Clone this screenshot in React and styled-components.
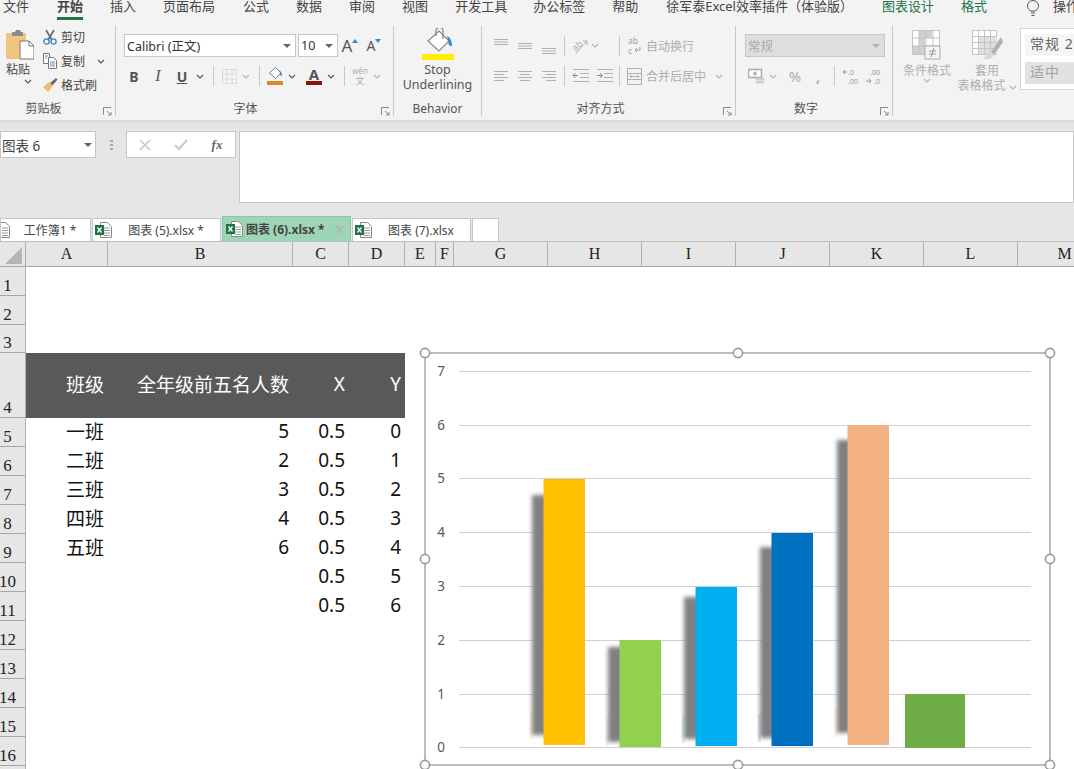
import React from 'react';
import styled, { createGlobalStyle } from 'styled-components';

const GlobalStyle = createGlobalStyle`
  html, body { margin: 0; padding: 0; background: #fff; }
  body { font-family: "Noto Sans", "Noto Sans CJK SC", sans-serif; }
`;

const CJK = `"Noto Sans", "Noto Sans CJK SC", sans-serif`;

const Page = styled.div`
  position: relative;
  width: 1074px;
  height: 769px;
  overflow: hidden;
  font-family: ${CJK};
  color: #444;
`;

const MenuBar = styled.div`
  display: flex;
  height: 20px;
  padding-left: 3px;
  background: #f3f3f3;
  white-space: nowrap;
`;

const MenuItem = styled.div`
  box-sizing: border-box;
  height: 20px;
  margin-left: ${p => p.$ml ?? 27}px;
  font-size: 13px;
  line-height: 12px;
  color: ${p => (p.$green ? '#217346' : '#444')};
  font-weight: ${p => (p.$active ? 700 : 400)};
  border-bottom: 3px solid ${p => (p.$active ? '#217346' : 'transparent')};
`;

const Ribbon = styled.div`
  display: flex;
  height: 100px;
  box-sizing: border-box;
  padding: 6px 0 4px;
  background: #f3f3f3;
`;

const Group = styled.div`
  position: relative;
  box-sizing: border-box;
  flex: ${p => (p.$w ? `0 0 ${p.$w}px` : '1')};
  display: flex;
  flex-direction: column;
  border-right: ${p => (p.$w ? '1px solid #c8c8c8' : 'none')};
`;

const GroupBody = styled.div`
  height: 76px;
  display: ${p => (p.$row ? 'flex' : 'block')};
  padding-left: ${p => p.$pl || 0}px;
`;

const GroupLabel = styled.div`
  height: 14px;
  margin-top: 1px;
  font-size: 12px;
  line-height: 14px;
  text-align: center;
  padding-right: ${p => p.$pr || 0}px;
  color: #555;
`;

const Launcher = styled.svg`
  position: absolute;
  right: 3px;
  bottom: 0;
  width: 9px;
  height: 9px;
`;

const PasteCol = styled.div`
  flex: 0 0 34px;
  padding: 4px 0 0 6px;
  display: flex;
  flex-direction: column;
  font-size: 12px;
`;

const PasteText = styled.div`
  line-height: 14px;
  margin-top: 3px;
`;

const ClipCol = styled.div`
  margin: -1px 0 0 2px;
  display: flex;
  flex-direction: column;
`;

const ClipRow = styled.div`
  display: flex;
  align-items: center;
  height: 24px;
  gap: 3px;
  font-size: 12px;
`;

const ToolRow = styled.div`
  display: flex;
  align-items: center;
  height: ${p => p.$h || 23}px;
  margin-top: ${p => p.$mt || 0}px;
  padding-left: ${p => p.$pl || 0}px;
  white-space: nowrap;
`;

const Tool = styled.span`
  flex: 0 0 ${p => p.$w}px;
  height: 22px;
  margin-left: ${p => p.$ml || 0}px;
  display: inline-flex;
  align-items: center;
  justify-content: center;
  position: relative;
  font-size: ${p => p.$size || 13}px;
  font-weight: ${p => p.$weight || 400};
  font-style: ${p => (p.$italic ? 'italic' : 'normal')};
  text-decoration: ${p => (p.$under ? 'underline' : 'none')};
  font-family: ${p => (p.$serif ? '"Liberation Serif", serif' : 'inherit')};
  color: ${p => (p.$off ? '#aeaeae' : '#555')};
`;

const RaisedMark = styled.svg`
  align-self: flex-start;
  margin-top: 4px;
`;

const Sep = styled.span`
  flex: 0 0 1px;
  height: 20px;
  margin: 0 ${p => p.$r ?? 0}px 0 ${p => p.$l ?? 0}px;
  background: #c8c8c8;
`;

const FieldBox = styled.div`
  box-sizing: border-box;
  flex: 0 0 ${p => p.$w}px;
  height: 23px;
  margin-left: ${p => p.$ml || 0}px;
  padding: 0 4px 0 2px;
  display: flex;
  align-items: center;
  justify-content: space-between;
  font-size: 12.5px;
  color: ${p => (p.$off ? '#aaa' : '#333')};
  background: ${p => (p.$off ? '#dfdedd' : '#fff')};
  border: 1px solid #c6c6c6;
`;

const OffText = styled.span`
  font-size: 12px;
  margin-left: ${p => p.$ml || 0}px;
  color: #aeaeae;
`;

const StopCol = styled.div`
  display: flex;
  flex-direction: column;
  align-items: center;
  padding-top: 2px;
`;

const StopBar = styled.div`
  width: 32px;
  height: 6px;
  margin-top: 2px;
  background: #ffee00;
`;

const StopText = styled.div`
  margin-top: 2px;
  font-size: 12.5px;
  line-height: 15px;
  text-align: center;
  color: #555;
`;

const BigTool = styled.div`
  flex: 0 0 ${p => p.$w}px;
  display: flex;
  flex-direction: column;
  align-items: center;
  padding-top: 4px;
  font-size: 12px;
  line-height: 15px;
  color: #aeaeae;
  white-space: nowrap;
`;

const BigIcon = styled.div`
  height: 32px;
  margin-bottom: 1px;
`;

const Gallery = styled.div`
  box-sizing: border-box;
  flex: 1;
  height: 62px;
  margin: 2px 0 0 2px;
  padding: 5px 0 0 4px;
  background: #fff;
  border: 1px solid #d4d4d4;
`;

const GalleryCell = styled.div`
  height: 22px;
  margin-bottom: 6px;
  padding-left: 5px;
  font-size: 14px;
  line-height: 20px;
  letter-spacing: 1px;
  white-space: nowrap;
  color: ${p => (p.$off ? '#a0a0a0' : '#666')};
  background: ${p => (p.$off ? '#e2e2e4' : '#f5f5f5')};
`;

const FormulaArea = styled.div`
  height: 96px;
  box-sizing: border-box;
  padding-top: 11px;
  display: flex;
  align-items: flex-start;
  background: linear-gradient(#d9d9d9, #e6e6e6 5px);
`;

const FormulaBox = styled.div`
  box-sizing: border-box;
  flex: ${p => (p.$w ? `0 0 ${p.$w}px` : '1')};
  height: ${p => p.$h || 27}px;
  margin-left: ${p => p.$ml || 0}px;
  background: #fff;
  border: 1px solid #c6c6c6;
  display: flex;
  align-items: center;
  font-size: 13.5px;
  color: #444;
`;

const NameText = styled.span`
  flex: 1;
  padding-left: 1px;
`;

const Grip = styled.span`
  flex: 0 0 3px;
  height: 12px;
  margin: 8px 0 0 14px;
  background: radial-gradient(circle, #aaa 1.2px, transparent 1.4px) 0 0 / 3px 4px;
`;

const FxCell = styled.span`
  flex: 1;
  display: flex;
  justify-content: center;
  font-family: "Liberation Serif", serif;
  font-style: italic;
  font-weight: 700;
  font-size: 13px;
  color: #666;
`;

const TabBar = styled.div`
  height: 26px;
  box-sizing: border-box;
  display: flex;
  align-items: flex-end;
  gap: 1px;
  background: #e6e6e6;
  border-bottom: 1px solid #bdbdbd;
`;

const FileTab = styled.div`
  box-sizing: border-box;
  flex: 0 0 ${p => p.$w}px;
  height: ${p => (p.$active ? 25 : 23)}px;
  display: flex;
  align-items: center;
  padding: 0 0 ${p => (p.$active ? 0 : 1)}px ${p => p.$pl ?? 2}px;
  font-size: 12px;
  white-space: nowrap;
  color: #444;
  font-weight: ${p => (p.$active ? 700 : 400)};
  background: ${p => (p.$active ? '#9fd5b7' : '#fff')};
  border: 1px solid ${p => (p.$active ? '#8fc4a6' : '#c6c6c6')};
  border-bottom: none;
`;

const TabTitle = styled.span`
  flex: ${p => (p.$left ? '0 0 auto' : 1)};
  margin-left: ${p => (p.$left ? 3 : 0)}px;
  text-align: center;
`;

const TabClose = styled.span`
  margin-left: 9px;
  font-size: 13px;
  color: #a9bdb1;
`;

const Sheet = styled.div`
  display: grid;
  grid-template-columns: 26px 82px 185px 56px 56px 31px 18px repeat(7, 94px);
  grid-template-rows: 25px 29px 29px 28px 65px repeat(13, 29px);
`;

const HeadCell = styled.div`
  box-sizing: border-box;
  background: #e6e6e6;
  border-right: 1px solid #b0b0b0;
  border-bottom: 1px solid #a6a6a6;
  font-family: "Liberation Serif", serif;
  font-size: 16px;
  color: #222;
`;

const Corner = styled(HeadCell)`
  position: relative;
  &::after {
    content: '';
    position: absolute;
    left: 5px;
    top: 5px;
    width: 17px;
    height: 17px;
    background: #b5b5b5;
    clip-path: polygon(100% 0, 100% 100%, 0 100%);
  }
`;

const ColHead = styled(HeadCell)`
  display: flex;
  align-items: center;
  justify-content: center;
`;

const RowHead = styled(HeadCell)`
  display: flex;
  align-items: flex-end;
  justify-content: center;
  padding-right: 10px;
  font-size: 17px;
  line-height: 18px;
`;

const Cell = styled.div`
  box-sizing: border-box;
  display: flex;
  align-items: center;
  justify-content: ${p => (p.$left ? 'flex-start' : 'flex-end')};
  padding: ${p => (p.$left ? '0 0 4px 40px' : '0 4px 4px 0')};
  font-size: 19px;
  white-space: nowrap;
  font-family: ${CJK};
  color: ${p => (p.$dark ? '#fff' : '#111')};
  background: ${p => (p.$dark ? '#595959' : '#fff')};
`;

const Blank = styled.div`
  grid-column: ${p => p.$from} / -1;
  background: #fff;
`;

const ChartSvg = styled.svg`
  position: absolute;
  left: 415px;
  top: 340px;
  width: 659px;
  height: 429px;
`;

const AxisLabel = styled.text`
  font-family: "Noto Sans", sans-serif;
  font-size: 13.5px;
  fill: #595959;
  text-anchor: middle;
`;

const Chevron = ({ off }) => (
  <svg width="8" height="5" viewBox="0 0 8 5">
    <path d="M1 1l3 3 3-3" fill="none" stroke={off ? '#b5b5b5' : '#555'} strokeWidth="1.1" />
  </svg>
);

const Caret = ({ off }) => (
  <svg width="8" height="4" viewBox="0 0 8 4">
    <path d="M0 0h8L4 4z" fill={off ? '#b5b5b5' : '#666'} />
  </svg>
);

const LauncherIcon = () => (
  <Launcher viewBox="0 0 9 9">
    <path d="M.5 8V.5H8M4 4l4 4M8 5v3H5" fill="none" stroke="#888" strokeWidth="1" />
  </Launcher>
);

const PasteIcon = () => (
  <svg width="28" height="30" viewBox="0 0 28 30">
    <path d="M0 3h20v26H0z" fill="#f0c67e" />
    <path d="M6 2h3l1-2h4l1 2h2v4H6z" fill="#8a8a8a" />
    <path d="M14 11h9l5 5v13H14z" fill="#fff" stroke="#777" />
    <path d="M23 11v5h5" fill="none" stroke="#777" />
  </svg>
);

const ScissorsIcon = () => (
  <svg width="16" height="16" viewBox="0 0 16 16">
    <path d="M4 1l6 10M12 1L6 11" stroke="#666" strokeWidth="1.6" fill="none" />
    <circle cx="4.5" cy="12.5" r="2.6" fill="none" stroke="#3d85c6" strokeWidth="1.3" />
    <circle cx="11.5" cy="12.5" r="2.6" fill="none" stroke="#3d85c6" strokeWidth="1.3" />
  </svg>
);

const CopyIcon = () => (
  <svg width="16" height="16" viewBox="0 0 16 16">
    <path d="M1.500 .5h6v10h-6z" fill="#fff" stroke="#777" />
    <path d="M6.500 4.500h5l3 3v8h-8z" fill="#fff" stroke="#777" />
    <path d="M8 9h5M8 11h5M8 13h5M3 3h3M3 5h2" stroke="#5b8fc7" />
  </svg>
);

const BrushIcon = () => (
  <svg width="16" height="16" viewBox="0 0 16 16">
    <path d="M8 6l6-5 1.500 1.500-5 6z" fill="#666" />
    <path d="M1 10l6-5 4 4-5 6z" fill="#e8bd6c" />
  </svg>
);

const StopBucketIcon = () => (
  <svg width="32" height="24" viewBox="0 0 32 24">
    <path d="M6 13L17 3l10 10-10 10z" fill="#fff" stroke="#888" strokeWidth="1.2" />
    <path d="M14 8V3a3.500 3.500 0 0 1 7 0v8" fill="none" stroke="#888" strokeWidth="1.2" />
    <path d="M25 8c3 1 5 5 5 10-3 0-4-2-3.500-4.500z" fill="#3d85c6" />
  </svg>
);

const LinesIcon = ({ rows }) => (
  <svg width="16" height="20" viewBox="0 0 16 20">
    {rows.map(([a, b, y]) => (
      <line key={y} x1={a} x2={b} y1={y} y2={y} stroke="#b0b0b0" />
    ))}
  </svg>
);

const IndentIcon = ({ flip }) => (
  <svg width="17" height="14" viewBox="0 0 17 14">
    <path d="M1 .5h16M8 4.500h9M8 8.500h9M1 12.500h16" stroke="#b0b0b0" />
    <path d={flip ? 'M1 6.500h5M4 4l2.500 2.500L4 9' : 'M1 6.500h5M3.500 4L1 6.500 3.500 9'} fill="none" stroke="#8a8a8a" />
  </svg>
);

const OrientIcon = () => (
  <svg width="18" height="16" viewBox="0 0 18 16">
    <text x="1" y="11" fontSize="9" fill="#aeaeae" transform="rotate(-40 6 8)">ab</text>
    <path d="M5 15L16 3M12 3h4v4" fill="none" stroke="#aeaeae" />
  </svg>
);

const WrapIcon = () => (
  <svg width="14" height="18" viewBox="0 0 14 18">
    <text x="0" y="7" fontSize="8.500" fill="#a0a0a0">ab</text>
    <text x="0" y="17" fontSize="8.500" fill="#a0a0a0">c</text>
    <path d="M12 10v3H7M9 11l-2 2 2 2" fill="none" stroke="#a0a0a0" />
  </svg>
);

const MergeIcon = () => (
  <svg width="15" height="17" viewBox="0 0 15 17">
    <path d="M.5.5h14v16H.5zM.5 5.500h14M.5 11.500h14" fill="none" stroke="#aeaeae" />
    <path d="M3 8.500h9M4.500 7L3 8.500 4.500 10M10.500 7L12 8.500 10.500 10" fill="none" stroke="#aeaeae" />
  </svg>
);

const GridIcon = () => (
  <svg width="15" height="15" viewBox="0 0 15 15">
    <path d="M.5.5h14v14H.5zM5 .5v14M10 .5v14M.5 5h14M.5 10h14" fill="none" stroke="#c4c4c4" strokeDasharray="1 1" />
  </svg>
);

const MoneyIcon = () => (
  <svg width="17" height="17" viewBox="0 0 17 17">
    <path d="M.5 1.500h13v8H.5z" fill="#fff" stroke="#aaa" strokeWidth="1.500" />
    <circle cx="7" cy="5.500" r="2" fill="#b5b5b5" />
    <ellipse cx="12" cy="11" rx="4.500" ry="1.500" fill="#cfcfcf" />
    <ellipse cx="12" cy="14" rx="4.500" ry="1.500" fill="#cfcfcf" />
  </svg>
);

const DecimalIcon = ({ top, bottom, left }) => (
  <svg width="16" height="17" viewBox="0 0 16 17">
    <text x={left ? 6 : 4} y="7" fontSize="7" fill="#999">{top}</text>
    <text x={left ? 6 : 8} y="16" fontSize="7" fill="#999">{bottom}</text>
    <path d={left ? 'M1 4h4M3 2L1 4l2 2' : 'M0 13h5M3 11l2 2-2 2'} fill="none" stroke="#999" />
  </svg>
);

const CondFormatIcon = () => (
  <svg width="30" height="30" viewBox="0 0 30 30">
    <path d="M.5.5h27v24H.5z" fill="#fff" stroke="#c4c4c4" />
    <path d="M7 1h13v7h-13zM7 8h6v8h-6zM1 16h12v8H1z" fill="#cfcfcf" />
    <path d="M7 .5v24M14 .5v24M21 .5v24M.5 8h27M.5 16h27" stroke="#c4c4c4" fill="none" />
    <path d="M13 16h15v13H13z" fill="#f3f3f3" stroke="#aaa" />
    <path d="M17 21h7M17 24h7M22 18l-3 9" stroke="#999" fill="none" />
  </svg>
);

const TableFormatIcon = () => (
  <svg width="31" height="32" viewBox="0 0 31 32">
    <path d="M.5.5h24v24H.5z" fill="#fff" stroke="#c4c4c4" />
    <path d="M6 6h19v18H6z" fill="#e0e0e0" />
    <path d="M6.500.5v24M12.500.5v24M18.500.5v24M.5 6.500h24M.5 12.500h24M.5 18.500h24" stroke="#c4c4c4" fill="none" />
    <path d="M29 7L19 22l3 3L31 12z" fill="#b0b0b0" />
    <path d="M18 21c-4 2-3 5-7 8 6 1 11-1 11-5z" fill="#d8d8d8" />
  </svg>
);

const BulbIcon = () => (
  <svg width="14" height="17" viewBox="0 0 14 17">
    <path d="M4.500 11C3 9.500 1.500 8 1.500 6a5.500 5.500 0 0 1 11 0c0 2-1.500 3.500-3 5zM5 13h4M5.500 15.500h3" fill="none" stroke="#555" />
  </svg>
);

const XlsIcon = () => (
  <svg width="17" height="16" viewBox="0 0 17 16">
    <path d="M5.500.5h7l4 4v11h-11z" fill="#fff" stroke="#8a8a8a" />
    <path d="M9 6h6M9 8.500h6M9 11h6M9 13.500h6" stroke="#9a9a9a" />
    <path d="M0 3h9v10H0z" fill="#217346" />
    <path d="M2.500 5.500l4 5M6.500 5.500l-4 5" stroke="#fff" strokeWidth="1.300" />
  </svg>
);

const CancelIcon = () => (
  <svg width="12" height="12" viewBox="0 0 12 12">
    <path d="M1 1l10 10M11 1L1 11" stroke="#c8c8c8" strokeWidth="1.6" />
  </svg>
);

const CheckIcon = () => (
  <svg width="14" height="12" viewBox="0 0 14 12">
    <path d="M1 6l4 4 8-9" fill="none" stroke="#c8c8c8" strokeWidth="2" />
  </svg>
);

const menuItems = [
  { t: '文件', ml: 0 },
  { t: '开始', active: true, ml: 28 },
  { t: '插入' },
  { t: '页面布局' },
  { t: '公式', ml: 28 },
  { t: '数据' },
  { t: '审阅' },
  { t: '视图' },
  { t: '开发工具' },
  { t: '办公标签', ml: 26 },
  { t: '帮助' },
  { t: '徐军泰Excel效率插件（体验版）', ml: 28 },
  { t: '图表设计', green: true, ml: 29 },
  { t: '格式', green: true },
];

const columns = ['A', 'B', 'C', 'D', 'E', 'F', 'G', 'H', 'I', 'J', 'K', 'L', 'M'];

const tableRows = {
  4: ['班级', '全年级前五名人数', 'X', 'Y'],
  5: ['一班', 5, 0.5, 0],
  6: ['二班', 2, 0.5, 1],
  7: ['三班', 3, 0.5, 2],
  8: ['四班', 4, 0.5, 3],
  9: ['五班', 6, 0.5, 4],
  10: ['', '', 0.5, 5],
  11: ['', '', 0.5, 6],
};

const gridLines = [
  { label: 7, y: 371 },
  { label: 6, y: 425 },
  { label: 5, y: 478 },
  { label: 4, y: 532 },
  { label: 3, y: 586 },
  { label: 2, y: 640 },
  { label: 1, y: 694 },
  { label: 0, y: 747 },
];

const bars = [
  { x: 543.5, w: 41.5, top: 479, bottom: 745, color: '#ffc000', sx: 532, st: 495, sb: 735 },
  { x: 619.5, w: 41.5, top: 640, bottom: 747, color: '#92d050', sx: 608, st: 647, sb: 742 },
  { x: 695.5, w: 41.5, top: 587, bottom: 746, color: '#00b0f0', sx: 684, st: 597, sb: 739 },
  { x: 771.5, w: 41.5, top: 533, bottom: 746, color: '#0070c0', sx: 760, st: 547, sb: 738 },
  { x: 847.5, w: 41.5, top: 425, bottom: 745, color: '#f4b183', sx: 837, st: 440, sb: 733 },
  { x: 905, w: 60, top: 694, bottom: 748, color: '#70ad47' },
];

const handles = [
  [425, 353], [738, 353], [1050, 353],
  [425, 559], [1050, 559],
  [425, 765], [738, 765], [1050, 765],
];

const Chart = () => (
  <ChartSvg viewBox="415 340 659 429">
    <defs>
      <filter id="barShadow" x="-80%" y="-5%" width="260%" height="110%">
        <feGaussianBlur stdDeviation="2" />
      </filter>
    </defs>
    <rect x="425" y="353" width="625" height="412" fill="#fff" stroke="#a0a0a0" strokeWidth="1.4" />
    {gridLines.map(l => (
      <g key={l.label}>
        <line x1="459" x2="1031" y1={l.y + 0.5} y2={l.y + 0.5} stroke="#d0d0d0" />
        <AxisLabel x="441" y={l.y + 4.5}>{l.label}</AxisLabel>
      </g>
    ))}
    {bars.map(b => (
      <g key={b.x}>
        {b.sx && (
          <>
            <rect x={b.sx - 2} y={b.sb - 24} width="3" height="28" fill={b.color} opacity=".18" />
            <rect x={b.sx} y={b.st} width={b.x - b.sx + 4} height={b.sb - b.st} fill="#808080" filter="url(#barShadow)" />
          </>
        )}
        <rect x={b.x} y={b.top} width={b.w} height={b.bottom - b.top} fill={b.color} />
      </g>
    ))}
    {handles.map(([x, y]) => (
      <circle key={`${x}-${y}`} cx={x} cy={y} r="4.6" fill="#fff" stroke="#9a9a9a" strokeWidth="1.6" />
    ))}
  </ChartSvg>
);

const App = () => {
  const rowNumbers = Array.from({ length: 17 }, (_, i) => i + 1);

  return (
    <Page>
      <GlobalStyle />

      <MenuBar>
        {menuItems.map(item => (
          <MenuItem key={item.t} $ml={item.ml} $active={item.active} $green={item.green}>{item.t}</MenuItem>
        ))}
        <MenuItem $ml={39}><BulbIcon /></MenuItem>
        <MenuItem $ml={13}>操作说明搜索</MenuItem>
      </MenuBar>

      <Ribbon>
        <Group $w={116}>
          <GroupBody $row>
            <PasteCol>
              <PasteIcon />
              <PasteText>粘贴</PasteText>
              <Tool $w={8} $ml={9}><Chevron /></Tool>
            </PasteCol>
            <ClipCol>
              <ClipRow><ScissorsIcon />剪切</ClipRow>
              <ClipRow><CopyIcon />复制<Tool $w={16} $ml={5}><Chevron /></Tool></ClipRow>
              <ClipRow><BrushIcon />格式刷</ClipRow>
            </ClipCol>
          </GroupBody>
          <GroupLabel $pr={28}>剪贴板</GroupLabel>
          <LauncherIcon />
        </Group>

        <Group $w={278}>
          <GroupBody>
            <ToolRow $mt={8} $pl={8}>
              <FieldBox $w={172}>Calibri (正文)<Caret /></FieldBox>
              <FieldBox $w={40} $ml={2}>10<Caret /></FieldBox>
              <Tool $w={24} $size={17}>A<RaisedMark width="6" height="4" viewBox="0 0 6 4"><path d="M0 4l3-4 3 4z" fill="#3d85c6" /></RaisedMark></Tool>
              <Tool $w={24} $size={14}>A<RaisedMark width="6" height="4" viewBox="0 0 6 4"><path d="M0 0l3 4 3-4z" fill="#3d85c6" /></RaisedMark></Tool>
            </ToolRow>
            <ToolRow $mt={8} $h={22} $pl={6}>
              <Tool $w={24} $weight={700} $size={14}>B</Tool>
              <Tool $w={24} $italic $size={16} $serif>I</Tool>
              <Tool $w={24} $under $weight={700} $size={14}>U</Tool>
              <Tool $w={12}><Chevron /></Tool>
              <Sep $l={7} $r={7} />
              <Tool $w={16}><GridIcon /></Tool>
              <Tool $w={18}><Chevron off /></Tool>
              <Sep $l={4} $r={6} />
              <Tool $w={18}>
                <svg width="18" height="20" viewBox="0 0 18 20">
                  <g transform="translate(2 0) scale(.5)"><path d="M3 14L15 3l11 11-11 11z" fill="#fff" stroke="#777" strokeWidth="2" /><path d="M22 9c4 1 6 5 6 11-3 0-5-2-4-5z" fill="#3d85c6" /></g>
                  <rect x="1" y="15" width="16" height="4" fill="#d68c2a" />
                </svg>
              </Tool>
              <Tool $w={16}><Chevron /></Tool>
              <Tool $w={18} $ml={5}>
                <svg width="18" height="20" viewBox="0 0 18 20">
                  <text x="9" y="14" fontSize="15" fontWeight="700" fill="#555" textAnchor="middle">A</text>
                  <rect x="1" y="15" width="16" height="4" fill="#8b1505" />
                </svg>
              </Tool>
              <Tool $w={16}><Chevron /></Tool>
              <Sep $l={5} $r={5} />
              <Tool $w={20}>
                <svg width="18" height="20" viewBox="0 0 18 20">
                  <text x="9" y="8" fontSize="8" fill="#aeaeae" textAnchor="middle">wén</text>
                  <text x="9" y="18" fontSize="9" fill="#aeaeae" textAnchor="middle">文</text>
                </svg>
              </Tool>
              <Tool $w={14}><Chevron off /></Tool>
            </ToolRow>
          </GroupBody>
          <GroupLabel $pr={18}>字体</GroupLabel>
          <LauncherIcon />
        </Group>

        <Group $w={88}>
          <GroupBody>
            <StopCol>
              <StopBucketIcon />
              <StopBar />
              <StopText>Stop<br />Underlining</StopText>
            </StopCol>
          </GroupBody>
          <GroupLabel>Behavior</GroupLabel>
        </Group>

        <Group $w={254}>
          <GroupBody>
            <ToolRow $mt={8} $pl={7}>
              <Tool $w={24}><LinesIcon rows={[[1, 15, 3.5], [1, 15, 6], [1, 15, 8.5]]} /></Tool>
              <Tool $w={24}><LinesIcon rows={[[1, 15, 7.5], [1, 15, 10], [1, 15, 12.5]]} /></Tool>
              <Tool $w={24}><LinesIcon rows={[[1, 15, 12.5], [1, 15, 15], [1, 15, 17.5]]} /></Tool>
              <Sep $l={3} $r={6} />
              <Tool $w={18}><OrientIcon /></Tool>
              <Tool $w={12}><Chevron off /></Tool>
              <Sep $l={18} />
              <Tool $w={14} $ml={8}><WrapIcon /></Tool>
              <OffText $ml={4}>自动换行</OffText>
            </ToolRow>
            <ToolRow $mt={8} $h={22} $pl={7}>
              <Tool $w={24}><LinesIcon rows={[[1, 15, 5.5], [1, 11, 8.5], [1, 15, 11.5], [1, 11, 14.5]]} /></Tool>
              <Tool $w={24}><LinesIcon rows={[[1, 15, 5.5], [3, 13, 8.5], [1, 15, 11.5], [3, 13, 14.5]]} /></Tool>
              <Tool $w={24}><LinesIcon rows={[[1, 15, 5.5], [5, 15, 8.5], [1, 15, 11.5], [5, 15, 14.5]]} /></Tool>
              <Sep $l={3} $r={3} />
              <Tool $w={24}><IndentIcon /></Tool>
              <Tool $w={24}><IndentIcon flip /></Tool>
              <Sep $l={3} />
              <Tool $w={15} $ml={7}><MergeIcon /></Tool>
              <OffText $ml={4}>合并后居中</OffText>
              <Tool $w={12} $ml={7}><Chevron off /></Tool>
            </ToolRow>
          </GroupBody>
          <GroupLabel $pr={16}>对齐方式</GroupLabel>
          <LauncherIcon />
        </Group>

        <Group $w={157}>
          <GroupBody>
            <ToolRow $mt={8} $pl={9}>
              <FieldBox $w={140} $off>常规<Caret off /></FieldBox>
            </ToolRow>
            <ToolRow $mt={8} $h={22} $pl={11}>
              <Tool $w={18}><MoneyIcon /></Tool>
              <Tool $w={16}><Chevron off /></Tool>
              <Tool $w={28} $off $size={15}>%</Tool>
              <Tool $w={18} $off $weight={700} $size={14}>,</Tool>
              <Sep $l={7} />
              <Tool $w={30}><DecimalIcon left top=".0" bottom=".00" /></Tool>
              <Tool $w={18}><DecimalIcon top=".00" bottom=".0" /></Tool>
            </ToolRow>
          </GroupBody>
          <GroupLabel $pr={16}>数字</GroupLabel>
          <LauncherIcon />
        </Group>

        <Group>
          <GroupBody $row $pl={5}>
            <BigTool $w={58}>
              <BigIcon><CondFormatIcon /></BigIcon>
              条件格式
              <Chevron off />
            </BigTool>
            <BigTool $w={62}>
              <BigIcon><TableFormatIcon /></BigIcon>
              套用
              <span>表格格式 <Chevron off /></span>
            </BigTool>
            <Gallery>
              <GalleryCell>常规 2</GalleryCell>
              <GalleryCell $off>适中</GalleryCell>
            </Gallery>
          </GroupBody>
        </Group>
      </Ribbon>

      <FormulaArea>
        <FormulaBox $w={96}>
          <NameText>图表 6</NameText>
          <Tool $w={14}><Caret /></Tool>
        </FormulaBox>
        <Grip />
        <FormulaBox $w={110} $ml={13}>
          <FxCell><CancelIcon /></FxCell>
          <FxCell><CheckIcon /></FxCell>
          <FxCell>fx</FxCell>
        </FormulaBox>
        <FormulaBox $h={72} $ml={3} />
      </FormulaArea>

      <TabBar>
        <FileTab $w={91} $pl={0}>
          <svg width="9" height="16" viewBox="8 0 9 16"><path d="M5.500.5h7l4 4v11h-11z" fill="#fff" stroke="#8a8a8a" /><path d="M9 6h6M9 8.500h6M9 11h6M9 13.500h6" stroke="#9a9a9a" /></svg>
          <TabTitle>工作簿1 *</TabTitle>
        </FileTab>
        <FileTab $w={129}><XlsIcon /><TabTitle>图表 (5).xlsx *</TabTitle></FileTab>
        <FileTab $w={129} $active $pl={3}>
          <XlsIcon /><TabTitle $left>图表 (6).xlsx *</TabTitle><TabClose>✕</TabClose>
        </FileTab>
        <FileTab $w={119}><XlsIcon /><TabTitle>图表 (7).xlsx</TabTitle></FileTab>
        <FileTab $w={27} />
      </TabBar>

      <Sheet>
        <Corner />
        {columns.map(c => <ColHead key={c}>{c}</ColHead>)}
        {rowNumbers.map(n => {
          const row = tableRows[n];
          return (
            <React.Fragment key={n}>
              <RowHead>{n}</RowHead>
              {row ? (
                <>
                  <Cell $left $dark={n === 4}>{row[0]}</Cell>
                  <Cell $dark={n === 4}>{row[1]}</Cell>
                  <Cell $dark={n === 4}>{row[2]}</Cell>
                  <Cell $dark={n === 4}>{row[3]}</Cell>
                  <Blank $from={6} />
                </>
              ) : (
                <Blank $from={2} />
              )}
            </React.Fragment>
          );
        })}
      </Sheet>

      <Chart />
    </Page>
  );
};

export default App;
